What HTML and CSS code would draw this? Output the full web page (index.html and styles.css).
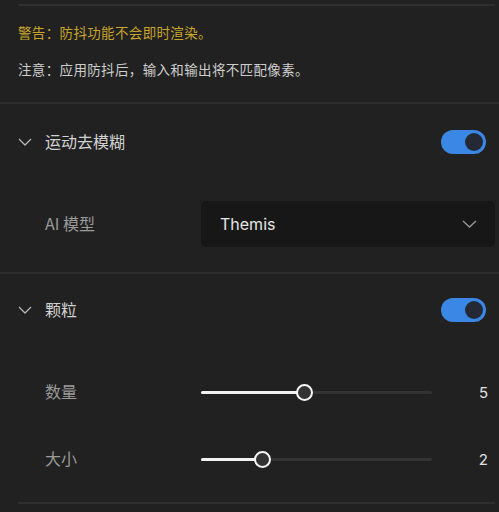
FILE: index.html
```html
<!DOCTYPE html>
<html lang="zh-CN">
<head>
    <meta charset="UTF-8">
    <meta name="viewport" content="width=device-width, initial-scale=1.0">
    <title>效果设置</title>
    <link rel="stylesheet" href="styles.css">
</head>
<body>
    <!-- Stabilization notes -->
    <div class="notes">
        <div class="rule-inset"></div>
        <p class="warn">警告：防抖功能不会即时渲染。</p>
        <p class="note">注意：应用防抖后，输入和输出将不匹配像素。</p>
    </div>

    <div class="rule"></div>

    <!-- Motion deblur -->
    <div class="section">
        <div class="section-header">
            <svg class="chevron" width="14" height="8" viewBox="0 0 14 8">
                <path d="M1 1 L7 7 L13 1" fill="none" stroke="#b5b5b5" stroke-width="1.3"/>
            </svg>
            <span class="section-title">运动去模糊</span>
            <div class="toggle on"><div class="knob"></div></div>
        </div>
        <div class="row model-row">
            <span class="label">AI 模型</span>
            <div class="select">
                <span>Themis</span>
                <svg width="15" height="8" viewBox="0 0 15 8">
                    <path d="M1 1 L7.5 7 L14 1" fill="none" stroke="#9a9a9a" stroke-width="1.3"/>
                </svg>
            </div>
        </div>
    </div>

    <div class="rule"></div>

    <!-- Grain -->
    <div class="section">
        <div class="section-header grain-header">
            <svg class="chevron" width="14" height="8" viewBox="0 0 14 8">
                <path d="M1 1 L7 7 L13 1" fill="none" stroke="#b5b5b5" stroke-width="1.3"/>
            </svg>
            <span class="section-title">颗粒</span>
            <div class="toggle on"><div class="knob"></div></div>
        </div>
        <div class="sliders">
            <div class="row slider-row">
                <span class="label">数量</span>
                <div class="slider">
                    <div class="fill" style="width: 44.6%"></div>
                    <div class="thumb" style="left: 44.6%"></div>
                </div>
                <span class="value">5</span>
            </div>
            <div class="row slider-row">
                <span class="label">大小</span>
                <div class="slider">
                    <div class="fill" style="width: 26.8%"></div>
                    <div class="thumb" style="left: 26.8%"></div>
                </div>
                <span class="value">2</span>
            </div>
        </div>
        <div class="rule-inset"></div>
    </div>
</body>
</html>
```

FILE: styles.css
```css
body {
    margin: 0;
    padding: 0;
    background-color: #212121;
    font-family: "Noto Sans CJK SC", "Noto Sans", sans-serif;
    color: #d0d0d0;
}

p {
    margin: 0;
}

/* Dividers */
.rule {
    height: 2px;
    background-color: #2c2c2c;
}

.rule-inset {
    height: 2px;
    margin: 0 4px 0 18px;
    background-color: #2e2e2e;
}

/* Notes block */
.notes {
    padding: 4px 0 24px 0;
}

.notes p {
    padding-left: 18px;
    font-size: 13.5px;
    line-height: 18px;
    letter-spacing: 0.35px;
}

.warn {
    margin-top: 17px !important;
    color: #c9a52c;
}

.note {
    margin-top: 19px !important;
    color: #cdcdcd;
}

/* Section header */
.section-header {
    display: flex;
    align-items: center;
    height: 76px;
    padding: 0 13px 0 18px;
}

.grain-header {
    height: 72px;
}

.chevron {
    margin-right: 13px;
}

.section-title {
    flex-grow: 1;
    padding-bottom: 3px;
    font-size: 16px;
    color: #d2d2d2;
}

/* Toggle */
.toggle {
    width: 45px;
    height: 24px;
    border-radius: 12px;
    background-color: #3b87e6;
    display: flex;
    align-items: center;
    justify-content: flex-end;
    padding: 0 3px;
    box-sizing: border-box;
}

.knob {
    width: 18px;
    height: 18px;
    border-radius: 50%;
    background-color: #232a35;
}

/* Rows */
.row {
    display: flex;
    align-items: center;
    padding-left: 45px;
}

.label {
    width: 156px;
    flex-shrink: 0;
    padding-bottom: 3px;
    font-size: 16px;
    color: #9a9a9a;
}

.model-row {
    padding-top: 21px;
    padding-bottom: 25px;
    padding-right: 4px;
}

.select {
    flex-grow: 1;
    height: 46px;
    display: flex;
    align-items: center;
    justify-content: space-between;
    padding: 0 18px 0 19px;
    background-color: #171717;
    border-radius: 5px;
    font-family: Inter, "Noto Sans", sans-serif;
    font-size: 16px;
    color: #e6e6e6;
}

/* Sliders */
.sliders {
    padding: 13px 0 9px 0;
}

.slider-row {
    height: 67px;
    padding-right: 11px;
}

.slider {
    position: relative;
    width: 231px;
    height: 3px;
    background-color: #333333;
    border-radius: 2px;
}

.fill {
    height: 3px;
    background-color: #f2f2f2;
    border-radius: 2px;
}

.thumb {
    position: absolute;
    top: 50%;
    width: 13px;
    height: 13px;
    margin: -8.5px 0 0 -8.5px;
    border: 2px solid #f5f5f5;
    border-radius: 50%;
    background-color: #333333;
}

.value {
    flex-grow: 1;
    text-align: right;
    font-family: Inter, "Noto Sans", sans-serif;
    font-size: 15px;
    color: #e0e0e0;
}
```
